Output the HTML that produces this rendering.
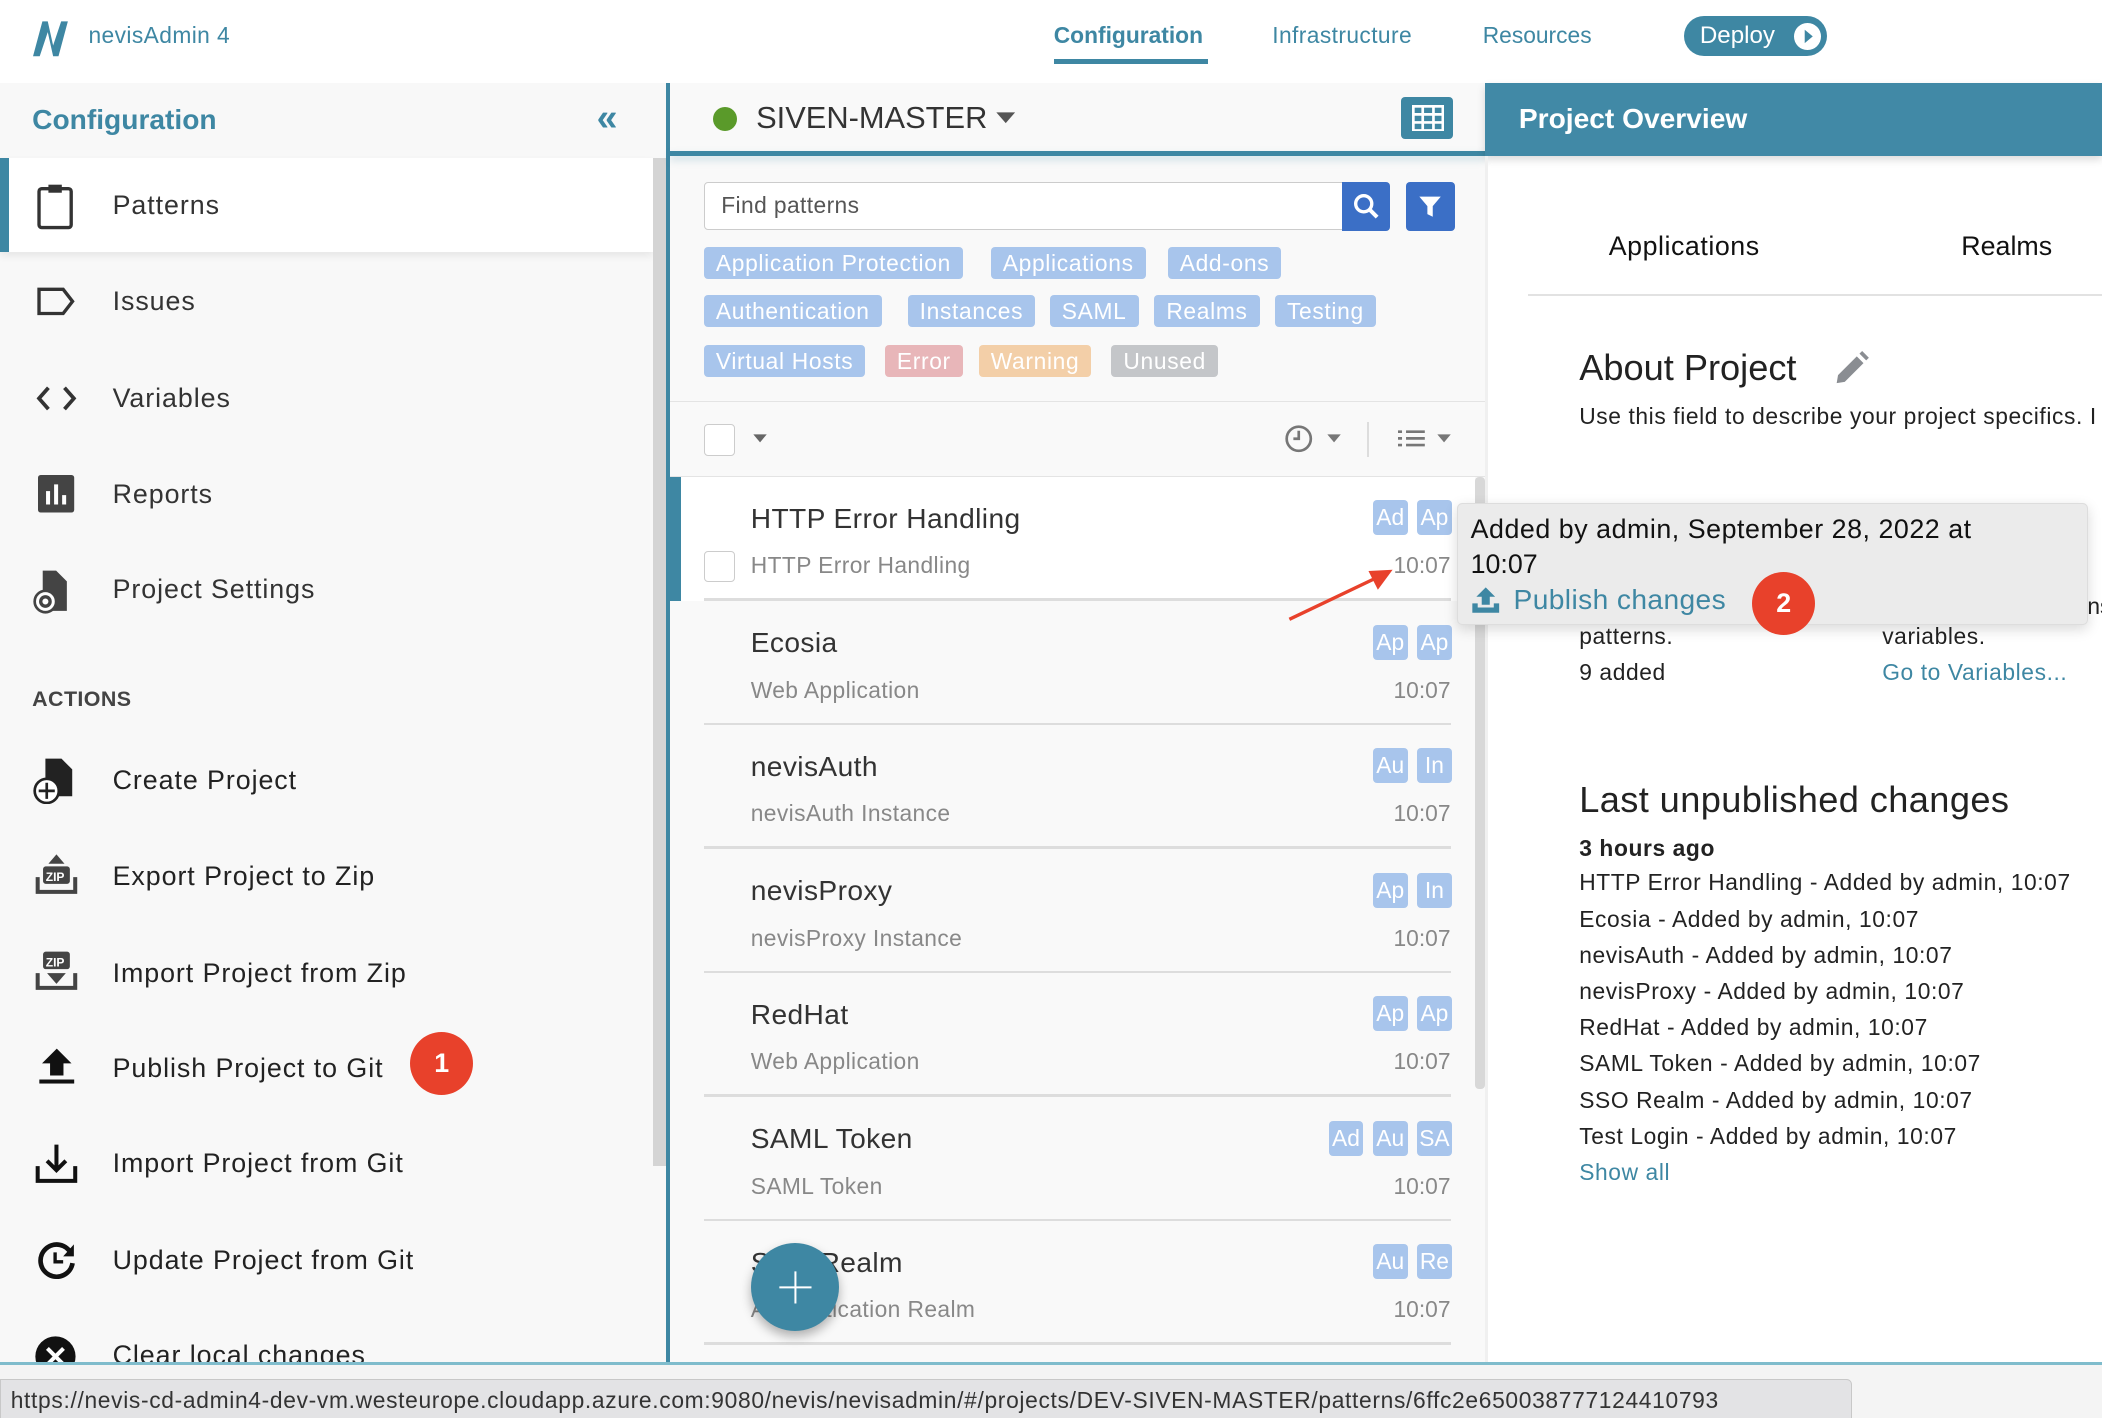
<!DOCTYPE html>
<html><head><meta charset="utf-8"><style>
html,body{margin:0;padding:0;background:#fff;overflow:hidden;width:2102px;height:1418px}
#w{zoom:1.3406;position:relative;width:1568px;height:1058px;font-family:"Liberation Sans",sans-serif;overflow:hidden;background:#fff}
.a{position:absolute;white-space:nowrap;line-height:1}
.tag{position:absolute;height:24px;line-height:24px;background:#a8c5ec;color:#fff;font-size:17px;padding:0 9px;border-radius:3px;white-space:nowrap;letter-spacing:0.5px}
.sm{position:absolute;height:26px;line-height:26px;width:26px;text-align:center;background:#a8c5ec;color:#fff;font-size:17px;border-radius:3px}
.it{position:absolute;left:500px;width:600px;height:92px;background:#f9f9f9}
.it .t{position:absolute;left:60px;top:19px;font-size:21px;color:#333;letter-spacing:0.3px}
.it .s{position:absolute;left:60px;top:56px;font-size:17px;color:#888;letter-spacing:0.3px}
.it .tm{position:absolute;right:18px;top:56px;font-size:17px;color:#888}
.it .ln{position:absolute;left:25px;right:18px;bottom:0;height:2px;background:#ddd}
.nv{font-size:20px;color:#333;letter-spacing:0.7px}
.ch{font-size:17px;color:#222;letter-spacing:0.45px}
.a.teal,.teal{color:#3e87a3}
</style></head><body><div id="w">
<!-- top bar -->
<svg class="a" style="left:22px;top:12px" width="32" height="32" viewBox="0 0 32 32"><path d="M3 30 L10 4 L14 4 L18 22 L24 4 L29 4 L22 30 L18 30 L14 12 L8 30 Z" fill="#3e87a3"/></svg>
<div class="a teal" style="left:66px;top:18px;font-size:17px;letter-spacing:0.3px">nevisAdmin 4</div>
<div class="a teal" style="left:786px;top:18px;font-size:17px;font-weight:bold">Configuration</div>
<div class="a" style="left:786px;top:44px;width:115px;height:4px;background:#3e87a3"></div>
<div class="a teal" style="left:949px;top:18px;font-size:17px;letter-spacing:0.3px">Infrastructure</div>
<div class="a teal" style="left:1106px;top:18px;font-size:17px">Resources</div>
<div class="a" style="left:1256px;top:12px;width:107px;height:30px;border-radius:15px;background:#3e87a3"></div>
<div class="a" style="left:1268px;top:18px;font-size:18px;color:#fff">Deploy</div>
<div class="a" style="left:1338px;top:17px;width:20px;height:20px;border-radius:10px;background:#fff"></div>
<svg class="a" style="left:1338px;top:17px" width="20" height="20"><path d="M8 5 L14 10 L8 15Z" fill="#3e87a3"/></svg>

<!-- sidebar -->
<div class="a" style="left:0;top:62px;width:498px;height:970px;background:#f8f8f8"></div>
<div class="a teal" style="left:24px;top:79px;font-size:21px;font-weight:bold">Configuration</div>
<div class="a teal" style="left:445px;top:74px;font-size:28px;font-weight:bold">«</div>
<div class="a" style="left:0;top:118px;width:487px;height:70px;background:#fff;box-shadow:0 3px 6px rgba(0,0,0,.08)"></div>
<div class="a" style="left:0;top:118px;width:7px;height:70px;background:#3e87a3"></div>
<div class="a" style="left:487px;top:118px;width:10px;height:752px;background:#d4d4d4"></div>
<svg class="a" style="left:26px;top:136px" width="30" height="36"><rect x="3" y="5" width="24" height="29" rx="2" fill="none" stroke="#333" stroke-width="2.5"/><rect x="10" y="2" width="10" height="6" fill="#333"/></svg>
<div class="a nv" style="left:84px;top:143px">Patterns</div>
<svg class="a" style="left:26px;top:212px" width="32" height="26"><path d="M3 4 H21 L28 13 L21 22 H3Z" fill="none" stroke="#333" stroke-width="2.5"/></svg>
<div class="a nv" style="left:84px;top:215px">Issues</div>
<svg class="a" style="left:26px;top:284px" width="32" height="26"><path d="M10 5 L3 13 L10 21 M22 5 L29 13 L22 21" fill="none" stroke="#333" stroke-width="2.8"/></svg>
<div class="a nv" style="left:84px;top:287px">Variables</div>
<svg class="a" style="left:28px;top:354px" width="28" height="30"><rect x="0" y="0" width="27" height="28" rx="2" fill="#444"/><rect x="6" y="12" width="3" height="10" fill="#fff"/><rect x="12" y="7" width="3" height="15" fill="#fff"/><rect x="18" y="15" width="3" height="7" fill="#fff"/></svg>
<div class="a nv" style="left:84px;top:359px">Reports</div>
<svg class="a" style="left:24px;top:424px" width="32" height="36"><path d="M8 2 H18 L26 10 V32 H8Z" fill="#444"/><circle cx="10" cy="25" r="8" fill="#fff" stroke="#444" stroke-width="2"/><circle cx="10" cy="25" r="3.5" fill="none" stroke="#444" stroke-width="2.5"/></svg>
<div class="a nv" style="left:84px;top:430px">Project Settings</div>
<div class="a" style="left:24px;top:514px;font-size:16px;color:#444;font-weight:bold;letter-spacing:0.3px">ACTIONS</div>
<svg class="a" style="left:24px;top:564px" width="34" height="36"><path d="M10 2 H22 L30 10 V30 H10Z" fill="#222"/><circle cx="11" cy="26" r="9" fill="#fff" stroke="#222" stroke-width="2"/><path d="M11 20 V32 M5 26 H17" stroke="#222" stroke-width="2"/></svg>
<div class="a nv" style="left:84px;top:572px;color:#222">Create Project</div>
<svg class="a" style="left:26px;top:636px" width="32" height="32"><path d="M2 18 V29 H30 V18" fill="none" stroke="#444" stroke-width="3"/><rect x="6" y="10" width="20" height="13" rx="2" fill="#444"/><text x="8" y="21" font-size="9" fill="#fff" font-family="Liberation Sans" font-weight="bold">ZIP</text><path d="M16 1 L10 8 H22Z" fill="#444"/></svg>
<div class="a nv" style="left:84px;top:644px;color:#222">Export Project to Zip</div>
<svg class="a" style="left:26px;top:708px" width="32" height="32"><path d="M2 18 V29 H30 V18" fill="none" stroke="#444" stroke-width="3"/><rect x="6" y="2" width="20" height="13" rx="2" fill="#444"/><text x="8" y="13" font-size="9" fill="#fff" font-family="Liberation Sans" font-weight="bold">ZIP</text><path d="M16 26 L9 18 H23Z" fill="#444"/></svg>
<div class="a nv" style="left:84px;top:716px;color:#222">Import Project from Zip</div>
<svg class="a" style="left:28px;top:780px" width="28" height="30"><path d="M14 2 L3 13 H9 V22 H19 V13 H25Z" fill="#111"/><rect x="1" y="25" width="26" height="3" fill="#111"/></svg>
<div class="a nv" style="left:84px;top:787px;color:#222">Publish Project to Git</div>
<div class="a" style="left:306px;top:770px;width:47px;height:47px;border-radius:50%;background:#e8412b;color:#fff;font-size:20px;font-weight:bold;text-align:center;line-height:47px">1</div>
<svg class="a" style="left:26px;top:852px" width="32" height="32"><path d="M2 18 V29 H30 V18" fill="none" stroke="#111" stroke-width="3"/><path d="M16 2 V21 M9 14 L16 21 L23 14" fill="none" stroke="#111" stroke-width="3"/></svg>
<div class="a nv" style="left:84px;top:858px;color:#222">Import Project from Git</div>
<svg class="a" style="left:26px;top:924px" width="32" height="32"><path d="M27 11 A12 12 0 1 0 28 18" fill="none" stroke="#111" stroke-width="3.5"/><path d="M29 4 V13 H21Z" fill="#111"/><path d="M15 10 V17 H21" fill="none" stroke="#111" stroke-width="2.5"/></svg>
<div class="a nv" style="left:84px;top:930px;color:#222">Update Project from Git</div>
<svg class="a" style="left:25px;top:996px" width="34" height="34"><circle cx="16" cy="16" r="15" fill="#111"/><path d="M10 10 L22 22 M22 10 L10 22" stroke="#fff" stroke-width="3"/></svg>
<div class="a nv" style="left:84px;top:1001px;color:#222">Clear local changes</div>

<div class="a" style="left:497px;top:62px;width:3px;height:956px;background:#3e87a3"></div>

<!-- middle -->
<div class="a" style="left:500px;top:62px;width:608px;height:956px;background:#f9f9f9"></div>
<div class="a" style="left:500px;top:113px;width:608px;height:3px;background:#3e87a3;box-shadow:0 3px 6px rgba(62,135,163,.25)"></div>
<div class="a" style="left:532px;top:80px;width:18px;height:18px;border-radius:50%;background:#5a9a2a"></div>
<div class="a" style="left:564px;top:77px;font-size:23px;color:#333">SIVEN-MASTER</div>
<svg class="a" style="left:742px;top:83px" width="16" height="10"><path d="M1 1 H15 L8 9Z" fill="#555"/></svg>
<div class="a" style="left:1045px;top:72px;width:39px;height:32px;border-radius:3px;background:#3e87a3"></div>
<svg class="a" style="left:1053px;top:78px" width="24" height="20"><rect x="1" y="1" width="22" height="18" fill="none" stroke="#fff" stroke-width="2"/><path d="M1 7 H23 M1 13 H23 M8 1 V19 M16 1 V19" stroke="#fff" stroke-width="2"/></svg>
<div class="a" style="left:525px;top:136px;width:476px;height:34px;border:1px solid #ccc;border-radius:3px 0 0 3px;background:#fff"></div>
<div class="a" style="left:538px;top:145px;font-size:17px;color:#555;letter-spacing:0.3px">Find patterns</div>
<div class="a" style="left:1001px;top:136px;width:36px;height:36px;background:#3b6fc6;border-radius:0 3px 3px 0"></div>
<svg class="a" style="left:1009px;top:144px" width="20" height="20"><circle cx="8" cy="8" r="6" fill="none" stroke="#fff" stroke-width="2.5"/><path d="M12 12 L18 18" stroke="#fff" stroke-width="3"/></svg>
<div class="a" style="left:1049px;top:136px;width:36px;height:36px;background:#3b6fc6;border-radius:3px"></div>
<svg class="a" style="left:1058px;top:145px" width="18" height="18"><path d="M1 2 H17 L11 9 V17 L7 15 V9Z" fill="#fff"/></svg>

<div class="tag" style="left:525px;top:184px">Application Protection</div>
<div class="tag" style="left:739px;top:184px">Applications</div>
<div class="tag" style="left:871px;top:184px">Add-ons</div>
<div class="tag" style="left:525px;top:220px">Authentication</div>
<div class="tag" style="left:677px;top:220px">Instances</div>
<div class="tag" style="left:783px;top:220px">SAML</div>
<div class="tag" style="left:861px;top:220px">Realms</div>
<div class="tag" style="left:951px;top:220px">Testing</div>
<div class="tag" style="left:525px;top:257px">Virtual Hosts</div>
<div class="tag" style="left:660px;top:257px;background:#e8b6b9">Error</div>
<div class="tag" style="left:730px;top:257px;background:#f3cfa8">Warning</div>
<div class="tag" style="left:829px;top:257px;background:#c4c6c9">Unused</div>
<div class="a" style="left:500px;top:299px;width:608px;height:1px;background:#e4e4e4"></div>
<div class="a" style="left:525px;top:316px;width:22px;height:23px;border:1px solid #ccc;border-radius:3px;background:#fff"></div>
<svg class="a" style="left:561px;top:323px" width="12" height="8"><path d="M1 1 H11 L6 7Z" fill="#666"/></svg>
<svg class="a" style="left:958px;top:316px" width="22" height="22"><circle cx="11" cy="11" r="9" fill="none" stroke="#777" stroke-width="2"/><path d="M11 5 V11 H7" fill="none" stroke="#777" stroke-width="2"/></svg>
<svg class="a" style="left:989px;top:323px" width="12" height="8"><path d="M1 1 H11 L6 7Z" fill="#777"/></svg>
<div class="a" style="left:1020px;top:315px;width:1px;height:26px;background:#ddd"></div>
<svg class="a" style="left:1043px;top:320px" width="22" height="14"><path d="M0 2 H3 M6 2 H20 M0 7 H3 M6 7 H20 M0 12 H3 M6 12 H20" stroke="#777" stroke-width="2"/></svg>
<svg class="a" style="left:1071px;top:323px" width="12" height="8"><path d="M1 1 H11 L6 7Z" fill="#777"/></svg>
<div class="a" style="left:500px;top:355px;width:608px;height:1px;background:#e4e4e4"></div>

<div class="it" style="top:356px;background:#fff"><div class="a" style="left:0;top:0;width:8px;height:92px;background:#3e87a3"></div><div class="t">HTTP Error Handling</div><div class="a" style="left:25px;top:55px;width:22px;height:22px;border:1px solid #ccc;border-radius:3px"></div><div class="s">HTTP Error Handling</div><div class="tm">10:07</div><div class="ln"></div><div class="sm" style="left:524px;top:17px">Ad</div><div class="sm" style="left:557px;top:17px">Ap</div></div>
<div class="it" style="top:449px"><div class="t">Ecosia</div><div class="s">Web Application</div><div class="tm">10:07</div><div class="ln"></div><div class="sm" style="left:524px;top:17px">Ap</div><div class="sm" style="left:557px;top:17px">Ap</div></div>
<div class="it" style="top:541px"><div class="t">nevisAuth</div><div class="s">nevisAuth Instance</div><div class="tm">10:07</div><div class="ln"></div><div class="sm" style="left:524px;top:17px">Au</div><div class="sm" style="left:557px;top:17px">In</div></div>
<div class="it" style="top:634px"><div class="t">nevisProxy</div><div class="s">nevisProxy Instance</div><div class="tm">10:07</div><div class="ln"></div><div class="sm" style="left:524px;top:17px">Ap</div><div class="sm" style="left:557px;top:17px">In</div></div>
<div class="it" style="top:726px"><div class="t">RedHat</div><div class="s">Web Application</div><div class="tm">10:07</div><div class="ln"></div><div class="sm" style="left:524px;top:17px">Ap</div><div class="sm" style="left:557px;top:17px">Ap</div></div>
<div class="it" style="top:819px"><div class="t">SAML Token</div><div class="s">SAML Token</div><div class="tm">10:07</div><div class="ln"></div><div class="sm" style="left:491px;top:17px">Ad</div><div class="sm" style="left:524px;top:17px">Au</div><div class="sm" style="left:557px;top:17px">SA</div></div>
<div class="it" style="top:911px"><div class="t">SSO Realm</div><div class="s">Authentication Realm</div><div class="tm">10:07</div><div class="ln"></div><div class="sm" style="left:524px;top:17px">Au</div><div class="sm" style="left:557px;top:17px">Re</div></div>
<div class="a" style="left:1100px;top:356px;width:8px;height:456px;background:#d8d8d8;border-radius:3px"></div>
<div class="a" style="left:560px;top:927px;width:66px;height:66px;border-radius:50%;background:#3e87a3;box-shadow:0 4px 8px rgba(0,0,0,.3)"></div>
<svg class="a" style="left:580px;top:947px" width="26" height="26"><path d="M13 1 V25 M1 13 H25" stroke="#fff" stroke-width="1.5"/></svg>

<!-- right -->
<div class="a" style="left:1108px;top:62px;width:460px;height:54px;background:#4189a6;box-shadow:0 3px 6px rgba(0,0,0,.15)"></div>
<div class="a" style="left:1133px;top:78px;font-size:21px;color:#fff;font-weight:bold">Project Overview</div>
<div class="a" style="left:1108px;top:116px;width:2px;height:900px;background:#f0f0f0"></div>
<div class="a" style="left:1200px;top:174px;font-size:20px;color:#111;letter-spacing:0.4px">Applications</div>
<div class="a" style="left:1463px;top:174px;font-size:20px;color:#111">Realms</div>
<div class="a" style="left:1140px;top:219px;width:428px;height:2px;background:#e2e2e2"></div>
<div class="a" style="left:1178px;top:261px;font-size:27px;color:#222">About Project</div>
<svg class="a" style="left:1368px;top:262px" width="26" height="26"><path d="M2 24 L3 18 L17 4 L22 9 L8 23Z M19 2 L21 0 L26 5 L24 7Z" fill="#8a8d92"/></svg>
<div class="a ch" style="left:1178px;top:302px">Use this field to describe your project specifics. I</div>
<div class="a" style="left:1557px;top:444px;font-size:17px;color:#222">ns</div>
<div class="a ch" style="left:1178px;top:466px">patterns.</div>
<div class="a ch" style="left:1178px;top:493px">9 added</div>
<div class="a ch" style="left:1404px;top:466px">variables.</div>
<div class="a ch teal" style="left:1404px;top:493px">Go to Variables...</div>
<div class="a" style="left:1178px;top:583px;font-size:27px;color:#222;letter-spacing:0.3px">Last unpublished changes</div>
<div class="a ch" style="left:1178px;top:624px;font-weight:bold">3 hours ago</div>
<div class="a ch" style="left:1178px;top:650px">HTTP Error Handling - Added by admin, 10:07</div>
<div class="a ch" style="left:1178px;top:677px">Ecosia - Added by admin, 10:07</div>
<div class="a ch" style="left:1178px;top:704px">nevisAuth - Added by admin, 10:07</div>
<div class="a ch" style="left:1178px;top:731px">nevisProxy - Added by admin, 10:07</div>
<div class="a ch" style="left:1178px;top:758px">RedHat - Added by admin, 10:07</div>
<div class="a ch" style="left:1178px;top:785px">SAML Token - Added by admin, 10:07</div>
<div class="a ch" style="left:1178px;top:812px">SSO Realm - Added by admin, 10:07</div>
<div class="a ch" style="left:1178px;top:839px">Test Login - Added by admin, 10:07</div>
<div class="a ch teal" style="left:1178px;top:866px">Show all</div>

<!-- tooltip -->
<div class="a" style="left:1087px;top:375px;width:469px;height:90px;background:#ebebeb;border:1px solid #ddd;border-radius:4px;box-shadow:0 3px 10px rgba(0,0,0,.15)"></div>
<div class="a" style="left:1097px;top:385px;font-size:20px;color:#111;letter-spacing:0.4px">Added by admin, September 28, 2022 at</div>
<div class="a" style="left:1097px;top:411px;font-size:20px;color:#111">10:07</div>
<svg class="a" style="left:1097px;top:437px" width="22" height="22"><path d="M11 1 L4 8 H8 V14 H14 V8 H18Z" fill="#3e87a3"/><path d="M1 13 V20 H21 V13 H17 V16 H5 V13Z" fill="#3e87a3"/></svg>
<div class="a teal" style="left:1129px;top:437px;font-size:21px;letter-spacing:0.3px">Publish changes</div>
<div class="a" style="left:1307px;top:427px;width:47px;height:47px;border-radius:50%;background:#e8412b;color:#fff;font-size:20px;font-weight:bold;text-align:center;line-height:47px">2</div>

<!-- arrow -->
<svg class="a" style="left:955px;top:420px" width="90" height="50"><path d="M7 42 L72 11" stroke="#e8412b" stroke-width="2.5"/><path d="M84 5 L66 6 L73 20Z" fill="#e8412b"/></svg>

<!-- status bar -->
<div class="a" style="left:0;top:1016px;width:1568px;height:2px;background:#7fbccc"></div>
<div class="a" style="left:0;top:1018px;width:1568px;height:40px;background:#f4f4f4"></div>
<div class="a" style="left:0;top:1029px;width:1380px;height:29px;background:#e3e3e5;border:1px solid #c8c8c8;border-radius:0 4px 0 0"></div>
<div class="a" style="left:8px;top:1036px;font-size:17px;color:#333;letter-spacing:0.5px">https://nevis-cd-admin4-dev-vm.westeurope.cloudapp.azure.com:9080/nevis/nevisadmin/#/projects/DEV-SIVEN-MASTER/patterns/6ffc2e650038777124410793</div>
</div></body></html>
